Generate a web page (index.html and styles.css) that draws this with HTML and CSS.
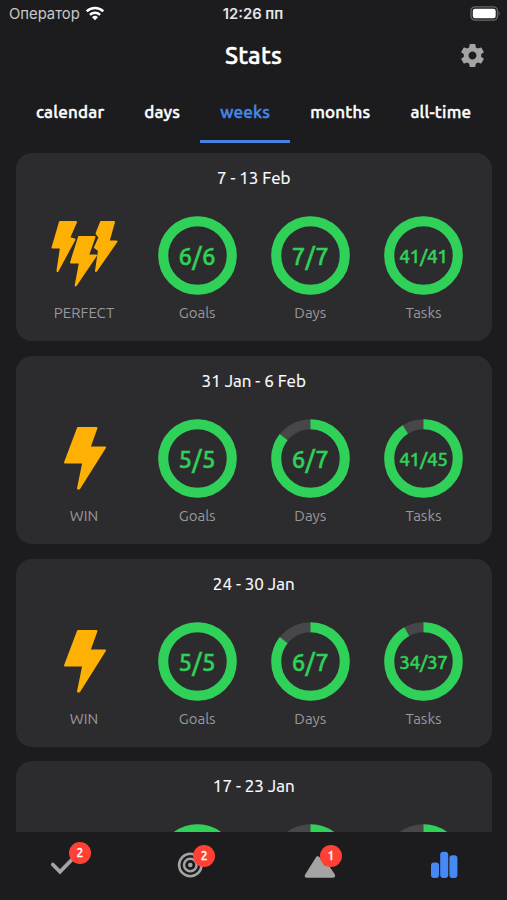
FILE: index.html
```html
<!DOCTYPE html>
<html lang="en">
<head>
  <meta charset="UTF-8">
  <meta name="viewport" content="width=device-width, initial-scale=1.0">
  <title>Stats</title>
  <link rel="stylesheet" href="styles.css">
</head>
<body>
  <!-- shared icons -->
  <svg class="defs" width="0" height="0">
    <symbol id="bolt" viewBox="0 0 79 79">
      <path d="M33 9 H51.5 L44.5 28.5 H60 L34.2 69.5 L33 69.5 L38.300 43.500 H20 Z"/>
    </symbol>
    <symbol id="bolts" viewBox="4.5 6 79 79">
      <path d="M19.5 12 H35.5 L28.500 28 L34 29.500 L17 61 L20.5 37.500 H12 Z"/>
      <path d="M60.5 12 H73.5 L68 31.500 H76 L55.5 61 L58.500 40.500 L54.5 37.500 L59 27.500 L56 23.500 Z"/>
      <path d="M38.500 27 H54 L47.500 45.500 H55.500 L35.2 75.5 L39.500 52.500 H30.500 Z"/>
    </symbol>
  </svg>

  <div class="status-bar">
    <div class="carrier">
      <span>Оператор</span>
      <svg width="20" height="15" viewBox="0 0 20 15">
        <path d="M1.7 5.4 A12 12 0 0 1 18.3 5.4" class="wave"/>
        <path d="M4.9 8.8 A7.4 7.4 0 0 1 15.1 8.8" class="wave"/>
        <path d="M10 14.3 L7 11.2 A4.3 4.3 0 0 1 13 11.2 Z" fill="#fff"/>
      </svg>
    </div>
    <div class="clock">12:26 пп</div>
    <div class="battery">
      <svg width="31" height="15" viewBox="0 0 31 15">
        <rect x="1" y=".9" width="26.5" height="13.2" rx="4" fill="none" stroke="#68686a" stroke-width="1.3"/>
        <rect x="2.8" y="2.7" width="22.9" height="9.6" rx="2.2" fill="#fff"/>
        <path d="M28.7 5 Q30.6 7.5 28.7 10 Z" fill="#68686a"/>
      </svg>
    </div>
  </div>

  <header class="header">
    <h1>Stats</h1>
    <svg class="gear" width="29" height="29" viewBox="0 0 24 24">
      <path d="M19.14 12.94c.04-.3.06-.61.06-.94 0-.32-.02-.64-.07-.94l2.03-1.58c.18-.14.23-.41.12-.61l-1.92-3.32c-.12-.22-.37-.29-.59-.22l-2.39.96c-.5-.38-1.03-.7-1.62-.94l-.36-2.54c-.04-.24-.24-.41-.48-.41h-3.84c-.24 0-.43.17-.47.41l-.36 2.54c-.59.24-1.13.57-1.62.94l-2.39-.96c-.22-.08-.47 0-.59.22L2.74 8.87c-.12.21-.08.47.12.61l2.03 1.58c-.05.3-.09.63-.09.94s.02.64.07.94l-2.03 1.58c-.18.14-.23.41-.12.61l1.92 3.32c.12.22.37.29.59.22l2.39-.96c.5.38 1.03.7 1.62.94l.36 2.54c.05.24.24.41.48.41h3.84c.24 0 .44-.17.47-.41l.36-2.54c.59-.24 1.13-.56 1.62-.94l2.39.96c.22.08.47 0 .59-.22l1.92-3.32c.12-.22.07-.47-.12-.61l-2.01-1.58zM12 15.3c-1.820 0-3.300-1.480-3.300-3.300s1.480-3.300 3.300-3.300 3.300 1.480 3.300 3.300-1.480 3.300-3.300 3.300z"/>
    </svg>
  </header>

  <nav class="tabs">
    <a class="tab">calendar</a>
    <a class="tab">days</a>
    <a class="tab active">weeks</a>
    <a class="tab">months</a>
    <a class="tab">all-time</a>
  </nav>

  <main class="list" id="list"></main>

  <footer class="bottom-nav">
    <div class="nav-item">
      <div class="nav-icon">
        <svg width="34" height="34" viewBox="0 0 34 34">
          <path d="M6.800 16.500 L14 23.800 L26 11.500" fill="none" stroke="#a4a4a4" stroke-width="3.8" stroke-linecap="round"/>
        </svg>
        <span class="badge badge-check">2</span>
      </div>
    </div>
    <div class="nav-item">
      <div class="nav-icon">
        <svg width="34" height="34" viewBox="0 0 34 34" fill="none" stroke="#a4a4a4">
          <circle cx="17.300" cy="17" r="11.2" stroke-width="2.6"/>
          <circle cx="17.300" cy="17" r="6.3" stroke-width="2.5"/>
          <circle cx="17.300" cy="17" r="2.3" fill="#a4a4a4" stroke="none"/>
        </svg>
        <span class="badge badge-goal">2</span>
      </div>
    </div>
    <div class="nav-item">
      <div class="nav-icon">
        <svg class="hill" width="38" height="34" viewBox="0 0 38 34">
          <path d="M17 9.500 Q18 9 19 10 L24 18.500 L28 18 L34 27 Q34.500 28.800 33 28.800 H7 Q5 28.800 6 27 Z" fill="#a4a4a4" stroke="#a4a4a4" stroke-width="2" stroke-linejoin="round"/>
        </svg>
        <span class="badge badge-hill">1</span>
      </div>
    </div>
    <div class="nav-item">
      <div class="nav-icon">
        <svg width="34" height="34" viewBox="0 0 34 34" fill="#4589f5">
          <rect x="4" y="14.500" width="8" height="15.500" rx="3"/>
          <rect x="13.200" y="3.700" width="8" height="26.300" rx="3"/>
          <rect x="22.400" y="7.200" width="8" height="22.800" rx="3"/>
        </svg>
      </div>
    </div>
  </footer>

  <script src="script.js"></script>
</body>
</html>
```

FILE: styles.css
```css
* {
  box-sizing: border-box;
}
body {
  margin: 0;
  height: 900px;
  display: flex;
  flex-direction: column;
  overflow: hidden;
  background-color: #1c1c1e;
  color: #fff;
  font-family: Ubuntu, "Noto Sans", sans-serif;
}
.defs {
  position: absolute;
}

/* status bar */
.status-bar {
  display: grid;
  grid-template-columns: 1fr auto 1fr;
  align-items: center;
  height: 28px;
  padding: 0 6px 0 9px;
  font-family: Inter, sans-serif;
  font-size: 14.800px;
}
.carrier {
  display: flex;
  align-items: center;
  gap: 5px;
  color: #c9c9ca;
}
.carrier svg {
  margin-top: -1px;
}
.wave {
  fill: none;
  stroke: #fff;
  stroke-width: 2.4;
}
.clock {
  margin-right: 4px;
  font-weight: 600;
  color: #e6e6e6;
}
.battery {
  display: flex;
  justify-content: flex-end;
  margin-top: -2px;
}

/* header */
.header {
  display: grid;
  grid-template-columns: 1fr auto 1fr;
  align-items: center;
  height: 55px;
  padding: 0 20px;
}
.header h1 {
  grid-column: 2;
  margin: 0;
  font-size: 24px;
  font-weight: 500;
  letter-spacing: 0.200px;
  -webkit-text-stroke: 0.500px #fff;
}
.gear {
  justify-self: end;
  fill: #a4a4a4;
}

/* tabs */
.tabs {
  display: flex;
  height: 60px;
  padding-left: 16px;
}
.tab {
  padding: 15px 20px 0;
  line-height: 28px;
  font-size: 17px;
  font-weight: 500;
  letter-spacing: 0.200px;
  white-space: nowrap;
  -webkit-text-stroke: 0.400px currentColor;
}
.tab.active {
  color: #4589e8;
  border-bottom: 3px solid #4484e0;
}

/* cards */
.list {
  flex: 1;
  min-height: 0;
  overflow: hidden;
  padding: 10px 15px 0 15.500px;
}
.card {
  height: 188px;
  margin-bottom: 14.800px;
  padding: 12px 12px 0;
  border-radius: 16px;
  background-color: #2c2c2e;
}
.card h2 {
  margin: 0 0 27px;
  line-height: 25px;
  height: 24px;
  text-align: center;
  font-size: 17px;
  font-weight: 400;
  -webkit-text-stroke: 0.200px #fff;
}
.stats {
  display: grid;
  grid-template-columns: repeat(4, 1fr);
}
.stat {
  display: flex;
  flex-direction: column;
  align-items: center;
}
.stat svg {
  width: 79px;
  height: 79px;
}
.bolt {
  fill: #ffb005;
  stroke: #ffb005;
  stroke-width: 2;
  stroke-linejoin: round;
}
.ring {
  display: grid;
  place-items: center;
}
.ring svg,
.ring span {
  grid-area: 1 / 1;
}
.ring circle {
  fill: none;
  stroke-width: 10;
}
.track {
  stroke: #474749;
}
.progress {
  stroke: #30d158;
}
.value {
  padding-top: 2px;
  color: #30d158;
  font-size: 24px;
  font-weight: 500;
  letter-spacing: 0.300px;
  -webkit-text-stroke: 0.400px currentColor;
}
.value.small {
  padding-top: 1px;
  font-size: 19px;
  letter-spacing: -0.400px;
}
.label {
  margin-top: 8px;
  line-height: 20px;
  font-size: 15px;
  color: #98989b;
}

/* bottom navigation */
.bottom-nav {
  display: grid;
  grid-template-columns: repeat(4, 1fr);
  height: 68px;
  background-color: #1c1c1e;
}
.nav-item {
  display: flex;
  justify-content: center;
  padding-top: 16px;
}
.nav-icon {
  position: relative;
  width: 34px;
  height: 34px;
}
.badge {
  position: absolute;
  width: 22px;
  height: 22px;
  border-radius: 50%;
  background-color: #ff4034;
  font-size: 12px;
  font-weight: 500;
  line-height: 22px;
  text-align: center;
  -webkit-text-stroke: 0.300px #fff;
}
.badge-check {
  left: 22.500px;
  top: -6px;
}
.badge-goal {
  left: 20px;
  top: -3.500px;
}
.badge-hill {
  left: 20px;
  top: -3.500px;
}
```

FILE: script.js
```javascript
const weeks = [
  { range: '7 - 13 Feb', result: 'PERFECT', goals: [6, 6], days: [7, 7], tasks: [41, 41] },
  { range: '31 Jan - 6 Feb', result: 'WIN', goals: [5, 5], days: [6, 7], tasks: [41, 45] },
  { range: '24 - 30 Jan', result: 'WIN', goals: [5, 5], days: [6, 7], tasks: [34, 37] },
  { range: '17 - 23 Jan', result: '', goals: [5, 5], days: [6, 7], tasks: [30, 35], collapsed: true }
];

function ring(label, [done, total], collapsed) {
  const percent = done / total * 100;
  // a full ring is drawn without dashes so no seam shows
  const dash = percent < 100 ? `pathLength="100" stroke-dasharray="${percent} 100"` : '';
  const value = `<span class="value ${total > 9 ? 'small' : ''}">${done}/${total}</span>`;
  return `
    <div class="stat">
      <div class="ring">
        <svg viewBox="0 0 79 79">
          <circle class="track" cx="39.5" cy="39.5" r="34.3"/>
          <circle class="progress" cx="39.5" cy="39.5" r="34.3" ${dash} transform="rotate(-90 39.5 39.5)"/>
        </svg>
        ${collapsed ? '' : value}
      </div>
      ${collapsed ? '' : `<div class="label">${label}</div>`}
    </div>`;
}

function resultIcon(result) {
  if (!result) {
    return '<div class="stat"></div>';
  }
  return `
    <div class="stat">
      <svg class="bolt"><use href="#${result === 'PERFECT' ? 'bolts' : 'bolt'}"/></svg>
      <div class="label">${result}</div>
    </div>`;
}

document.getElementById('list').innerHTML = weeks.map(week => `
  <section class="card">
    <h2>${week.range}</h2>
    <div class="stats">
      ${resultIcon(week.result)}
      ${ring('Goals', week.goals, week.collapsed)}
      ${ring('Days', week.days, week.collapsed)}
      ${ring('Tasks', week.tasks, week.collapsed)}
    </div>
  </section>`).join('');
```
